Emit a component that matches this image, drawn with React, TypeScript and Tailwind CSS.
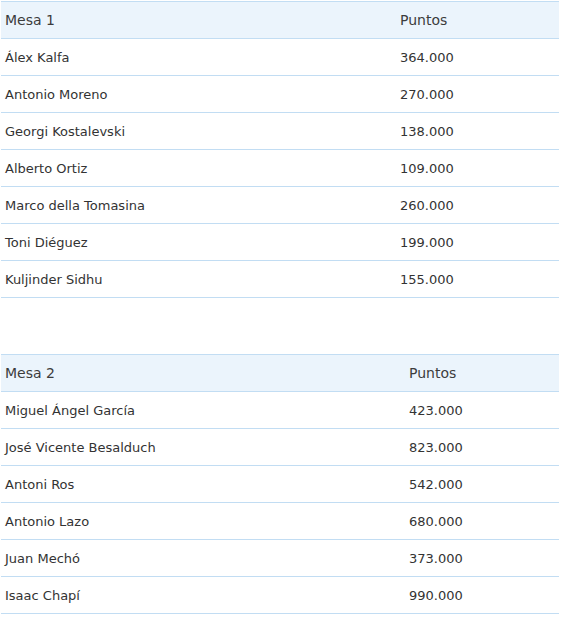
const MESAS = [
  {
    title: 'Mesa 1',
    col: 'w-[395px]',
    rows: [
      ['Álex Kalfa', '364.000'],
      ['Antonio Moreno', '270.000'],
      ['Georgi Kostalevski', '138.000'],
      ['Alberto Ortiz', '109.000'],
      ['Marco della Tomasina', '260.000'],
      ['Toni Diéguez', '199.000'],
      ['Kuljinder Sidhu', '155.000'],
    ],
  },
  {
    title: 'Mesa 2',
    col: 'w-[404px]',
    rows: [
      ['Miguel Ángel García', '423.000'],
      ['José Vicente Besalduch', '823.000'],
      ['Antoni Ros', '542.000'],
      ['Antonio Lazo', '680.000'],
      ['Juan Mechó', '373.000'],
      ['Isaac Chapí', '990.000'],
    ],
  },
];

function Mesa({ title, col, rows }: { title: string; col: string; rows: string[][] }) {
  return (
    <div className="w-[558px] ml-px border-t border-[#c2ddf3]">
      <div className="flex h-[37px] items-center pt-px bg-[#ebf4fc] border-b border-[#c2ddf3] text-[14px] text-[#3c3c3c]">
        <div className={`${col} pl-1`}>{title}</div>
        <div className="pl-1">Puntos</div>
      </div>
      {rows.map(([name, pts]) => (
        <div key={name} className="flex h-[37px] items-center pt-[2px] border-b border-[#c2ddf3]">
          <div className={`${col} pl-1`}>{name}</div>
          <div className="pl-1">{pts}</div>
        </div>
      ))}
    </div>
  );
}

export default function App() {
  return (
    <div
      className="w-[561px] h-[617px] bg-white pt-px text-[13px] text-[#333]"
      style={{ fontFamily: '"DejaVu Sans", Verdana, sans-serif' }}
    >
      <div className="flex flex-col gap-[56px]">
        {MESAS.map((m) => (
          <Mesa key={m.title} {...m} />
        ))}
      </div>
    </div>
  );
}
